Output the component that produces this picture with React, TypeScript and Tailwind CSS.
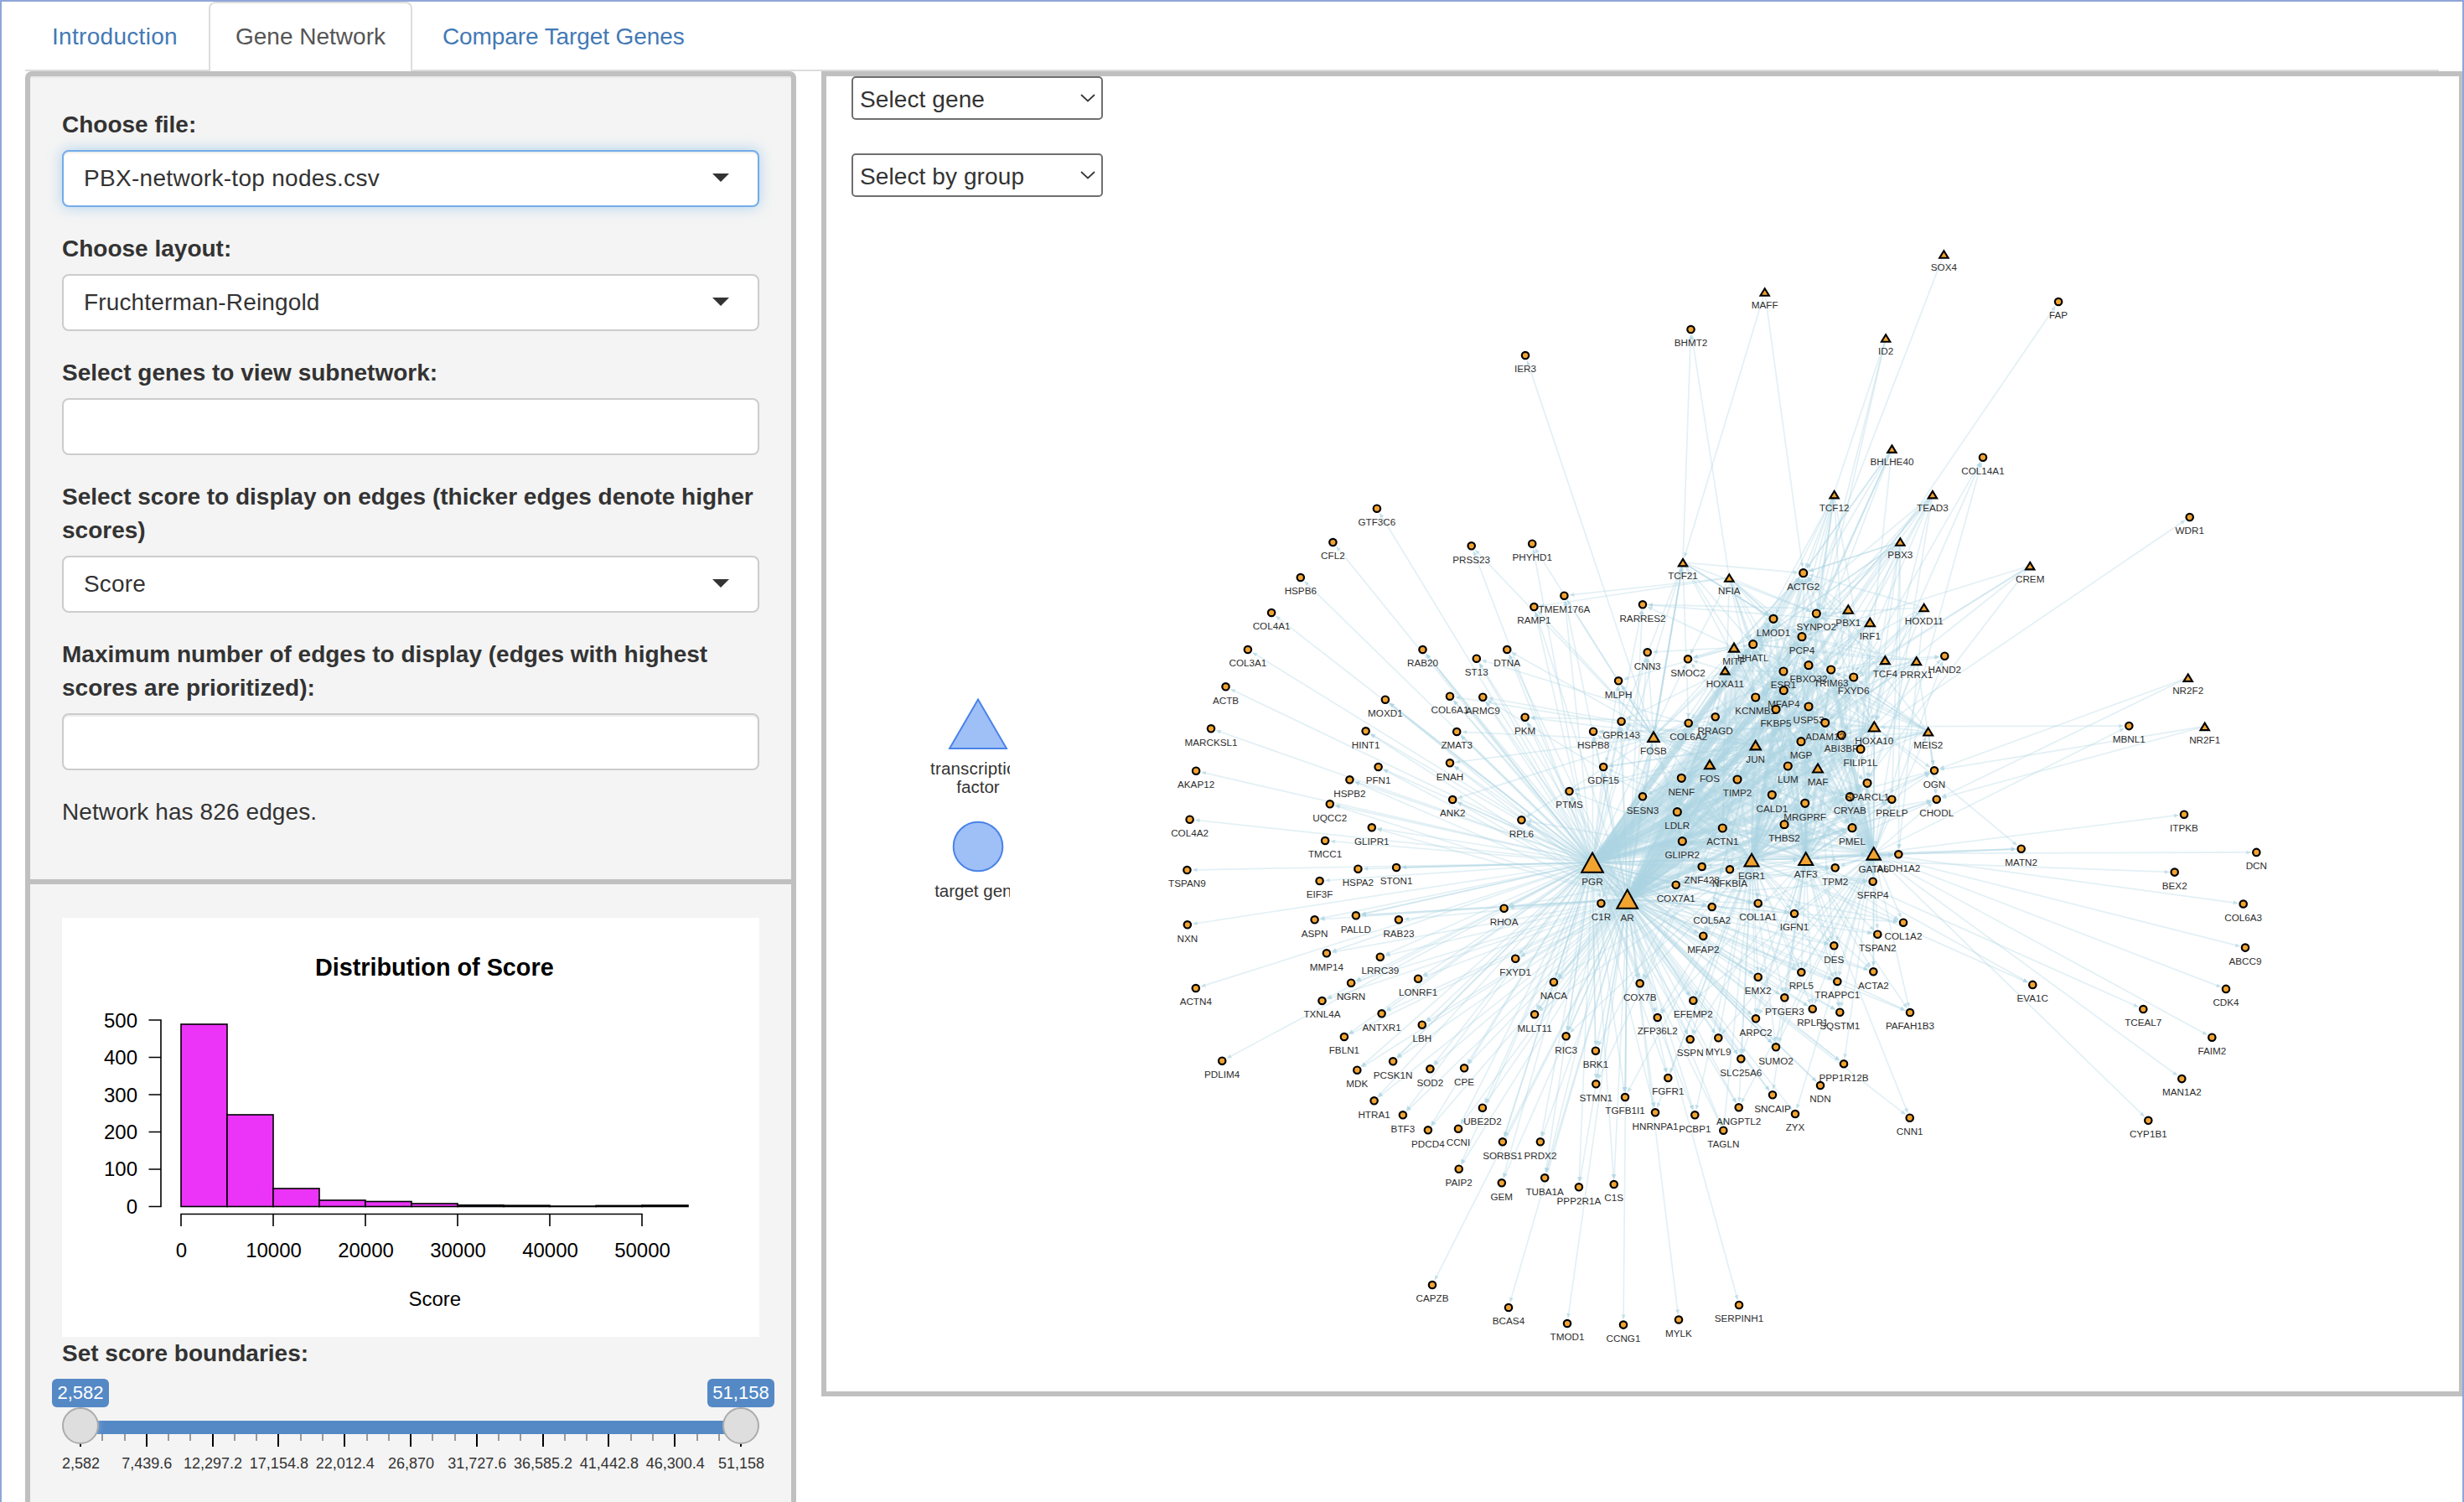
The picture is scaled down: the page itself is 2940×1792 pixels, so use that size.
import React from "react";

type Kind = "gene" | "tf";
type GeneNode = { id: string; x: number; y: number; kind: Kind; h: number };

/* Target genes as "name x y src,src": sources are the regulators drawn as incoming edges. */
const OUTER = `
GTF3C6 1642.9 606.7 PGR|CFL2 1590.4 647 PGR|HSPB6 1551.8 689 PGR|COL4A1 1517.1 731 PGR|COL3A1 1488.9 775 PGR
ACTB 1462.5 819.3 PGR|MARCKSL1 1445 869.3 PGR|AKAP12 1427.1 919.7 PGR|PRSS23 1755.7 651.3 PGR,FOSB
PHYHD1 1828.2 648.7 PGR,FOSB|TMEM176A 1866.4 710.7 PGR,AR,NFIA,FOSB|RAMP1 1830.4 724 PGR,AR,NFIA,FOSB
RAB20 1697.5 775 PGR,AR,PGR|ST13 1761.8 785.7 PGR,AR,JUN|DTNA 1798.2 775 PGR,AR,FOS|MLPH 1931.1 812.3 PGR,AR,MITF,FOSB,EGR1
MOXD1 1652.9 834.7 PGR,AR,PGR|COL6A1 1730 830.7 PGR,AR,JUN|ARMC9 1769.3 831.7 PGR,AR,JUN,EGR1|PKM 1819.6 855.7 PGR,AR,JUN,HOXA10
HSPB8 1901.1 872.7 PGR,AR,JUN,HOXA10,EGR1|GPR143 1934.6 860.7 PGR,AR,HOXA11,FOSB,EGR1|HINT1 1629.6 872.3 PGR,AR
ZMAT3 1738.2 873 PGR,AR,JUN|ENAH 1730 910.3 PGR,AR,FOSB|PFN1 1644.6 915 PGR,AR|HSPB2 1610.4 930.3 PGR,AR
GDF15 1913.2 915 PGR,AR,JUN,ATF3,TCF21,HOXA10|ANK2 1733.2 954 PGR,AR,FOSB|PTMS 1872.5 944 PGR,AR,FOS,EGR1,JUN
UQCC2 1586.8 959.3 PGR,AR|COL4A2 1419.6 977.7 PGR|RPL6 1815.4 978.3 PGR,AR,FOSB,EGR1|GLIPR1 1636.8 987.3 PGR,AR
TMCC1 1581.1 1003 PGR|TSPAN9 1416.4 1038 PGR|HSPA2 1620.4 1036.7 PGR|STON1 1666.1 1035 PGR,PGR|EIF3F 1574.6 1051 PGR
C1R 1910.4 1077.7 PGR,AR,FOSB|NXN 1416.8 1103.3 PGR|ASPN 1568.6 1097.3 PGR,AR|PALLD 1617.9 1092.3 PGR,AR,PGR,AR
RAB23 1668.9 1097.3 AR|RHOA 1794.6 1083.7 PGR,AR,EGR1|MMP14 1582.9 1137.3 PGR,AR|LRRC39 1646.8 1141.7 PGR,AR
FXYD1 1808.2 1143.7 PGR,AR,EGR1|NGRN 1612.1 1172.7 PGR,AR|LONRF1 1692.1 1167.7 PGR,AR|NACA 1853.9 1171.7 PGR,AR,EGR1,JUN
ACTN4 1426.8 1179 PGR|TXNL4A 1577.5 1194 PGR,AR|ANTXR1 1648.6 1209.3 PGR,AR|MLLT11 1831.1 1210.3 PGR,AR,EGR1,FOS
LBH 1696.8 1222.7 PGR,AR|RIC3 1868.6 1236.3 PGR,AR,EGR1,FOSB|BRK1 1903.9 1253.7 PGR,AR,JUN|FBLN1 1603.9 1237 PGR,AR
PDLIM4 1458.2 1265.7 PGR|MDK 1619.3 1276.7 PGR,AR|PCSK1N 1662.1 1266.3 PGR,AR,PGR|SOD2 1706.4 1275.3 PGR,AR
CPE 1747.1 1274.3 PGR,AR|STMN1 1904.3 1293.3 PGR,AR,JUN|HTRA1 1639.6 1313.3 PGR,AR|BTF3 1673.9 1330.3 PGR,AR
PDCD4 1703.9 1348.3 PGR,AR|CCNI 1740 1346.7 PGR,AR|UBE2D2 1768.9 1321.7 PGR,AR|SORBS1 1792.9 1362.3 PGR,AR,PGR
PRDX2 1837.9 1362.3 PGR,AR|PAIP2 1740.7 1394.7 PGR,AR|GEM 1791.8 1411.3 PGR,AR|TUBA1A 1843.2 1405.3 PGR,AR,FOSB
PPP2R1A 1883.9 1416.3 PGR,AR|C1S 1925.7 1413 PGR,AR|CAPZB 1709 1533 AR|BCAS4 1800 1560 AR|TMOD1 1870 1579 AR
CCNG1 1937 1580.6 AR|MYLK 2003 1574.5 AR|SERPINH1 2075 1557 AR|IER3 1820 424 FOSB|BHMT2 2017.5 393 TCF21,NFIA
FAP 2456.1 360 JUN|COL14A1 2366 545.7 GATA6,ATF3,EGR1|WDR1 2612.7 617 AR|MBNL1 2540.3 866.1 HOXA10,GATA6
ITPKB 2606 971.7 GATA6|MATN2 2411.7 1012.7 GATA6,ATF3,EGR1,HOXA10|DCN 2692.3 1016.9 GATA6|BEX2 2594.7 1040.6 ATF3
COL6A3 2676.7 1078.5 GATA6|ABCC9 2679 1130.6 GATA6|CDK4 2656 1179.9 GATA6|EVA1C 2425.3 1174.9 ATF3,EGR1
TCEAL7 2557.3 1204 ATF3|FAIM2 2639.3 1237.7 GATA6|MAN1A2 2603.3 1287.1 GATA6|CYP1B1 2563.3 1336.8 GATA6
RARRES2 1960 721.3 PGR,AR,MITF,PBX1,IRF1|CNN3 1965.7 778.3 PGR,AR,MITF,FOSB|SMOC2 2014 786.3 NFIA,MITF,PGR,JUN,PBX1,HOXA11
COL6A2 2014.7 862.7 PGR,AR,TCF21,HOXA11,JUN|RRAGD 2046.7 855.3 PGR,AR,HOXA11,MITF,JUN
SESN3 1960 950.3 PGR,AR,FOS,JUN,TCF21|HAND2 2320.3 782.7 GATA6,PRRX1,HOXA10,TCF4|OGN 2308 919.3 NR2F1,NR2F2,PGR,AR,EGR1,ATF3,MEIS2,HOXA10,PRRX1
CHODL 2310.7 953.7 NR2F1,NR2F2,PGR,AR,EGR1,ATF3,MEIS2,GATA6|PRELP 2257.3 953.7 PGR,AR,ATF3,EGR1,JUN,GATA6,PBX3
ALDH1A2 2265.3 1019.3 PGR,AR,ATF3,HOXD11,PBX3|TPM2 2189.7 1035.3 PGR,AR,GATA6,EGR1,MAF|ZNF428 2030.7 1034 PGR,AR,JUN,EGR1
NFKBIA 2064 1037.3 PGR,AR,FOS,JUN,ATF3|COX7A1 1999.7 1055.7 PGR,AR,EGR1,FOS|SFRP4 2234.7 1051.7 PGR,AR,GATA6,EGR1,HOXA10
COL5A2 2042.7 1082 PGR,AR,JUN,EGR1|COL1A1 2097.7 1077.7 PGR,AR,EGR1,GATA6,JUN|IGFN1 2141 1090 PGR,AR,ATF3,EGR1,GATA6
COL1A2 2271 1100.7 PGR,AR,GATA6,ATF3,EGR1|TSPAN2 2240.3 1114.7 PGR,AR,GATA6,ATF3|MFAP2 2032.3 1116.7 PGR,AR,EGR1,JUN
DES 2188.3 1128.3 PGR,AR,ATF3,GATA6,EGR1|COX7B 1956.7 1173.3 PGR,AR,EGR1,JUN|EMX2 2097.7 1165.7 PGR,AR,EGR1,ATF3,GATA6
RPL5 2149.3 1160 PGR,AR,ATF3,EGR1,GATA6|TRAPPC1 2192.3 1171 PGR,AR,ATF3,EGR1,GATA6|ACTA2 2235.3 1159.3 PGR,AR,GATA6,ATF3,EGR1,HOXA10
EFEMP2 2020.3 1193.7 PGR,AR,EGR1,GATA6|PTGER3 2129.3 1190.3 PGR,AR,ATF3,GATA6,EGR1|RPLP1 2162.7 1203.7 PGR,AR,ATF3,EGR1,GATA6
SQSTM1 2195.3 1207.7 PGR,AR,ATF3,GATA6,MAF|PAFAH1B3 2279 1208 AR,ATF3,GATA6,PGR|ZFP36L2 1977.7 1214 PGR,AR,EGR1,ATF3
ARPC2 2095 1215.3 PGR,AR,EGR1,ATF3,GATA6|SSPN 2016.7 1240 PGR,AR,EGR1,ATF3|MYL9 2050.3 1238.3 PGR,AR,EGR1,GATA6
SLC25A6 2077.3 1263.3 PGR,AR,EGR1,ATF3|SUMO2 2119 1249.3 PGR,AR,EGR1,ATF3,GATA6,AR|PPP1R12B 2200 1269.3 PGR,AR,GATA6
NDN 2172 1295 AR,PGR|FGFR1 1990.3 1286 PGR,AR,EGR1|TGFB1I1 1939 1309 PGR,AR,AR,EGR1|SNCAIP 2115 1306.3 AR,PGR,ATF3
HNRNPA1 1975 1327.3 PGR,AR,EGR1|PCBP1 2022.3 1330.3 PGR,AR,EGR1|ANGPTL2 2074.7 1321.3 PGR,AR,EGR1,GATA6
ZYX 2142 1329 AR,GATA6|TAGLN 2056.3 1348.7 PGR,AR,EGR1|CNN1 2278.7 1333.7 AR,ATF3`;

/* Genes of the dense core; every hub points at them. */
const CORE = `
ACTG2 2151.7 683.7|SYNPO2 2167.3 732|LMOD1 2116 738.3|PCP4 2150 759.7|HHATL 2091.7 768.7|FBXO32 2158 793.7
ESR1 2128 801|TRIM63 2184.7 799|FXYD6 2211.7 808|MFAP4 2128.3 823.7|KCNMB1 2094.7 832|USP53 2158 843|FKBP5 2119 846.3
ABI3BP 2197.3 877|ADAM12 2177.7 862.3|FILIP1L 2220 893.7|MGP 2149 884.7|LUM 2133.3 914|NENF 2006.3 928.3|TIMP2 2073 930
CALD1 2114.3 948.3|LDLR 2001.3 968.7|CRYAB 2207.3 950.7|SPARCL1 2228 934.3|MRGPRF 2153.7 958.3|ACTN1 2055.3 988
GLIPR2 2007.3 1003.7|THBS2 2129 983.7|PMEL 2210 987.7`;

/* Transcription factors: name x y height. */
const FACTORS = `
SOX4 2319.4 303.3 10|MAFF 2105.7 348.3 10|ID2 2250.1 403.3 10|BHLHE40 2257.4 535.5 10|TCF12 2188.6 590 10|TEAD3 2305.9 590 10
CREM 2422.2 675 10|PBX3 2267.3 646.3 10|TCF21 2008 671 10|NFIA 2063.3 689.3 10|PBX1 2205.3 726.8 11|HOXD11 2295.7 724.8 10
IRF1 2231.3 742.3 11|MITF 2069 772.5 11.5|HOXA11 2058.3 800 10|TCF4 2249.3 787.5 10.5|PRRX1 2286.7 788.5 10.5
FOSB 1973 879 13|JUN 2094.7 889 12|FOS 2040 912 11.5|MAF 2169 916.3 11.5|HOXA10 2236.3 866.7 12.7|MEIS2 2300.7 872.8 10.5
NR2F2 2610.7 808.5 10|NR2F1 2630.7 866.7 10|EGR1 2090 1026 16.3|ATF3 2154.7 1024.5 16.3|GATA6 2235.7 1018.3 15.8
PGR 1900 1029 24.6|AR 1941.7 1072.5 23.7`;

/* Further regulator -> target links. */
const EXTRA = `MAFF>TCF21,ACTG2|SOX4>ACTN1|ID2>LUM,ACTN1,CALD1|FOSB>TCF21|PGR>TCF21,HOXA10,EGR1,ATF3,GATA6,JUN,FOS,MITF,HOXA11,MAF
AR>TCF21,HOXA10,EGR1,ATF3,GATA6,JUN,FOS,FOSB,HOXD11,PBX1|GATA6>HOXA10,MEIS2,ATF3|ATF3>EGR1,GATA6,JUN|EGR1>ATF3,FOS,JUN,MAF
TCF21>HHATL,KCNMB1,FOSB,LMOD1|NFIA>HHATL,SYNPO2,LMOD1,FBXO32,ESR1,MFAP4,TRIM63|CREM>FXYD6,PCP4,FOS,ATF3|MEIS2>HOXA10,ACTG2,TRIM63
PBX3>HOXA10,ACTG2,ACTG2,SYNPO2,HHATL|HOXD11>ACTG2,SYNPO2,HOXA10|TEAD3>GATA6,HOXA10,ESR1,LUM,FXYD6
TCF12>ACTG2,SYNPO2,HOXA10,LMOD1,MGP|BHLHE40>ACTG2,SYNPO2,PMEL,FBXO32,MFAP4`;

const split = (s: string) => s.trim().split(/[|\n]/);

const NODES: GeneNode[] = [];
const EDGES: { from: string; to: string; w: number }[] = [];

split(FACTORS).forEach((r) => {
  const [id, x, y, h] = r.split(" ");
  NODES.push({ id, x: +x, y: +y, kind: "tf", h: +h });
});
split(OUTER).forEach((r) => {
  const [id, x, y, src] = r.split(" ");
  NODES.push({ id, x: +x, y: +y, kind: "gene", h: 10 });
  src.split(",").forEach((from) => EDGES.push({ from, to: id, w: 2 }));
});

/* Share of the core, in percent, that each secondary factor regulates. */
const SECONDARY: [string, number][] = [
  ["JUN", 40], ["FOS", 45], ["FOSB", 55], ["MAF", 50], ["HOXA10", 75], ["MEIS2", 40], ["TCF21", 30], ["NFIA", 22],
  ["PBX1", 42], ["IRF1", 42], ["MITF", 42], ["HOXA11", 36], ["TCF4", 45], ["PRRX1", 40], ["PBX3", 22], ["TEAD3", 10],
  ["TCF12", 14], ["BHLHE40", 8], ["HOXD11", 20], ["CREM", 4],
];
split(CORE).forEach((r, i) => {
  const [id, x, y] = r.split(" ");
  NODES.push({ id, x: +x, y: +y, kind: "gene", h: 10.6 });
  EDGES.push({ from: "PGR", to: id, w: i < 20 ? 8.5 : 5 });
  EDGES.push({ from: "AR", to: id, w: i < 20 ? 7.5 : 5 });
  ["EGR1", "ATF3", "GATA6"].forEach((from, k) => EDGES.push({ from, to: id, w: (i + k) % 3 === 0 ? 5 : 2.8 }));
  SECONDARY.forEach(([from, limit], k) => {
    if ((i * 37 + k * 53 + i * k * 11) % 100 < limit) EDGES.push({ from, to: id, w: 2 });
  });
});
split(EXTRA).forEach((r) => {
  const [from, to] = r.split(">");
  to.split(",").forEach((t) => EDGES.push({ from, to: t, w: 2 }));
});

const BY_ID = new Map(NODES.map((n) => [n.id, n]));

function Edge({ from, to, w }: { from: string; to: string; w: number }) {
  const a = BY_ID.get(from)!;
  const b = BY_ID.get(to)!;
  const dx = b.x - a.x;
  const dy = b.y - a.y;
  const len = Math.hypot(dx, dy) || 1;
  const ux = dx / len;
  const uy = dy / len;
  const tipX = b.x - ux * (b.h / 2 + 1);
  const tipY = b.y - uy * (b.h / 2 + 1);
  const size = 5.5 + w * 0.25;
  const bx = tipX - ux * size;
  const by = tipY - uy * size;
  const half = size * 0.38;
  return (
    <g>
      <line x1={a.x} y1={a.y} x2={bx} y2={by} strokeWidth={w * 0.85} strokeOpacity={0.35} />
      <path
        d={`M${tipX} ${tipY}L${bx - uy * half} ${by + ux * half}L${bx + uy * half} ${by - ux * half}Z`}
        fillOpacity={0.75}
        stroke="none"
      />
    </g>
  );
}

function NodeShape({ n }: { n: GeneNode }) {
  const big = n.h > 20;
  const half = n.h * (big ? 0.52 : 0.52);
  const labelY = n.kind === "gene" ? n.y + 20.2 : n.y + n.h / 2 + 14.8;
  return (
    <g>
      {n.kind === "gene" ? (
        <circle cx={n.x} cy={n.y} r={n.h / 2 - 0.8} fill="#f2a431" stroke="#000" strokeWidth={2.2} />
      ) : (
        <path
          d={`M${n.x} ${n.y - n.h / 2 + 0.9}L${n.x + half} ${n.y + n.h / 2 - 0.6}L${n.x - half} ${n.y + n.h / 2 - 0.6}Z`}
          fill="#f2a431"
          stroke="#000"
          strokeWidth={2.1}
        />
      )}
      <text x={n.x} y={labelY} fontSize={11.7} textAnchor="middle" fill="#2e2e2e">
        {n.id}
      </text>
    </g>
  );
}

function Network() {
  return (
    <svg
      className="absolute inset-0 h-[1569px] w-[1948px] font-['Liberation_Sans',sans-serif]"
      viewBox="986 91 1948 1569"
    >
      <clipPath id="legend">
        <rect x={1085} y={800} width={120} height={300} />
      </clipPath>
      <g clipPath="url(#legend)" fontSize={20.5} fill="#343434" textAnchor="middle">
        <path d="M1167 834.5L1201 893H1133Z" fill="#9fbff7" stroke="#4a83e8" strokeWidth={2} />
        <circle cx={1167} cy={1010} r={29.3} fill="#9fbff7" stroke="#4a83e8" strokeWidth={2} />
        <text x={1167} y={924} textLength={114} >transcription</text>
        <text x={1167} y={945.5}>factor</text>
        <text x={1167} y={1070}>target gene</text>
      </g>
      <g stroke="#add5e3" fill="#add5e3">
        {EDGES.map((e, i) => (
          <Edge key={i} {...e} />
        ))}
      </g>
      {NODES.map((n) => (
        <NodeShape key={n.id} n={n} />
      ))}
    </svg>
  );
}

const BAR_TOPS = [1222, 1330, 1418, 1432, 1433.5, 1436, 1437.8, 1438.2, 1439, 1438.4, 1438];

function Histogram() {
  return (
    <svg
      className="block h-[500px] w-[832px] bg-white font-['Liberation_Sans',sans-serif]"
      viewBox="74 1095 832 500"
    >
      <text x={518.3} y={1164} fontSize={28.8} fontWeight={700} textAnchor="middle">
        Distribution of Score
      </text>
      {BAR_TOPS.map((top, i) => (
        <rect key={i} x={216 + i * 55} y={top} width={55} height={1439.5 - top} fill="#eb34f7" stroke="#000" strokeWidth={1.6} />
      ))}
      <path
        d="M177.5 1217H192V1439.5H177.5M177.5 1261.5H192M177.5 1306H192M177.5 1350.5H192M177.5 1395H192M216 1463V1448.5H766V1463M326 1448.5V1463M436 1448.5V1463M546 1448.5V1463M656 1448.5V1463"
        fill="none"
        stroke="#000"
        strokeWidth={1.6}
      />
      {[500, 400, 300, 200, 100, 0].map((v, i) => (
        <text key={v} x={164} y={1225.8 + i * 44.4} fontSize={24} textAnchor="end">
          {v}
        </text>
      ))}
      {[0, 10000, 20000, 30000, 40000, 50000].map((v, i) => (
        <text key={v} x={216.5 + i * 110} y={1500} fontSize={24} textAnchor="middle">
          {v}
        </text>
      ))}
      <text x={518.8} y={1557.5} fontSize={24} textAnchor="middle">
        Score
      </text>
    </svg>
  );
}

const TICKS = ["2,582", "7,439.6", "12,297.2", "17,154.8", "22,012.4", "26,870", "31,727.6", "36,585.2", "41,442.8", "46,300.4", "51,158"];

function RangeSlider() {
  return (
    <div className="relative h-[130px]">
      <div className="absolute left-[22px] top-[60px] h-4 w-[788px] bg-[#5489c6]" />
      {Array.from({ length: 31 }, (_, i) => (
        <div
          key={i}
          className={i % 3 === 0 ? "absolute top-[76px] h-[15px] w-0.5 bg-black" : "absolute top-[76px] h-2 w-0.5 bg-[#999]"}
          style={{ left: 21 + i * 26.27 }}
        />
      ))}
      {TICKS.map((t, i) => (
        <div
          key={t}
          className="absolute top-[101px] w-[100px] text-center text-[18px] leading-[20px] text-[#333]"
          style={{ left: -27.5 + i * 78.8 }}
        >
          {t}
        </div>
      ))}
      <div className="absolute left-0 top-11 size-11 rounded-full border-2 border-[#ababab] bg-[#dedede] shadow-[1px_1px_6px_rgba(255,255,255,0.2)]" />
      <div className="absolute right-0 top-11 size-11 rounded-full border-2 border-[#ababab] bg-[#dedede]" />
      <div className="absolute -left-3 top-2.5 flex h-[34px] w-[68px] items-center justify-center rounded-md bg-[#5489c6] text-[22px] leading-none text-white">
        2,582
      </div>
      <div className="absolute -right-[18px] top-2.5 flex h-[34px] w-20 items-center justify-center rounded-md bg-[#5489c6] text-[22px] leading-none text-white">
        51,158
      </div>
    </div>
  );
}

function Field({ label, value, focused, inset }: { label: React.ReactNode; value?: string; focused?: boolean; inset?: boolean }) {
  return (
    <div className="mb-[30px]">
      <div className="mb-2.5 font-bold">{label}</div>
      <div
        className={
          focused
            ? "flex h-[68px] items-center justify-between rounded-lg border-2 border-[#74ace9] bg-white pl-6 pr-[34px] tracking-[0.3px] shadow-[inset_0_2px_2px_rgba(0,0,0,0.075),0_0_16px_rgba(102,175,233,0.5)]"
            : inset
              ? "flex h-[68px] items-center rounded-lg border-2 border-[#ccc] bg-white shadow-[inset_0_2px_2px_rgba(0,0,0,0.075)]"
              : "flex h-[68px] items-center justify-between rounded-lg border-2 border-[#ccc] bg-white pl-6 pr-[34px] tracking-[0.15px]"
        }
      >
        {value && <span>{value}</span>}
        {value && <span className="-mt-0.5 border-x-[10px] border-t-[10px] border-x-transparent border-t-[#333]" />}
      </div>
    </div>
  );
}

function NativeSelect({ label }: { label: string }) {
  return (
    <div className="flex h-[52px] w-[300px] items-center justify-between rounded-[5px] border-2 border-[#6f6f6f] bg-white pl-2 pr-[7px] leading-10">
      <span className="pt-1 tracking-[0.1px]">{label}</span>
      <svg className="h-2.5 w-[18px]" viewBox="0 0 18 10" fill="none" stroke="#3a3a3a" strokeWidth={1.8}>
        <path d="M1 1l8 7.5 8-7.5" />
      </svg>
    </div>
  );
}

export default function App() {
  return (
    <div className="h-[1792px] w-[2940px] overflow-hidden border-x-2 border-t-2 border-[#8fa6d9] bg-white pl-7 font-['Liberation_Sans',sans-serif] text-[28px] leading-10 text-[#333]">
      <nav className="mr-7 flex h-[83px] gap-1 border-b-2 border-[#ddd] text-[#4479b5]">
        <a className="w-[215px] px-8 py-[22px] tracking-[0.3px]">Introduction</a>
        <a className="z-10 h-[83px] w-[243px] whitespace-nowrap rounded-t-lg border-2 border-b-0 border-[#ddd] bg-white px-[30px] py-5 text-[#555]">Gene Network</a>
        <a className="px-8 py-[22px] tracking-[-0.1px]">Compare Target Genes</a>
      </nav>
      <div className="flex items-start gap-[30px]">
        <aside className="w-[920px] shrink-0">
          <section className="h-[964px] rounded-t-lg border-x-[6px] border-t-[6px] border-[#c0c0c0] bg-[#f4f4f4] px-[38px] pt-[38px] shadow-[inset_0_2px_2px_rgba(0,0,0,0.05)]">
            <Field label="Choose file:" value="PBX-network-top nodes.csv" focused />
            <Field label="Choose layout:" value="Fruchterman-Reingold" />
            <Field label="Select genes to view subnetwork:" />
            <Field label={<>Select score to display on edges (thicker edges denote higher<br />scores)</>} value="Score" />
            <Field label={<>Maximum number of edges to display (edges with highest<br />scores are prioritized):</>} inset />
            <div className="tracking-[0.1px]">Network has 826 edges.</div>
          </section>
          <section className="h-[760px] border-x-[6px] border-t-[6px] border-[#c0c0c0] bg-[#f4f4f4] px-[38px] pt-10">
            <Histogram />
            <div className="font-bold">Set score boundaries:</div>
            <RangeSlider />
          </section>
        </aside>
        <main className="relative h-[1581px] w-[1960px] shrink-0 border-6 border-[#c0c0c0] bg-white">
          <div className="relative z-10 ml-[30px] flex w-[300px] flex-col gap-10">
            <NativeSelect label="Select gene" />
            <NativeSelect label="Select by group" />
          </div>
          <Network />
        </main>
      </div>
    </div>
  );
}
